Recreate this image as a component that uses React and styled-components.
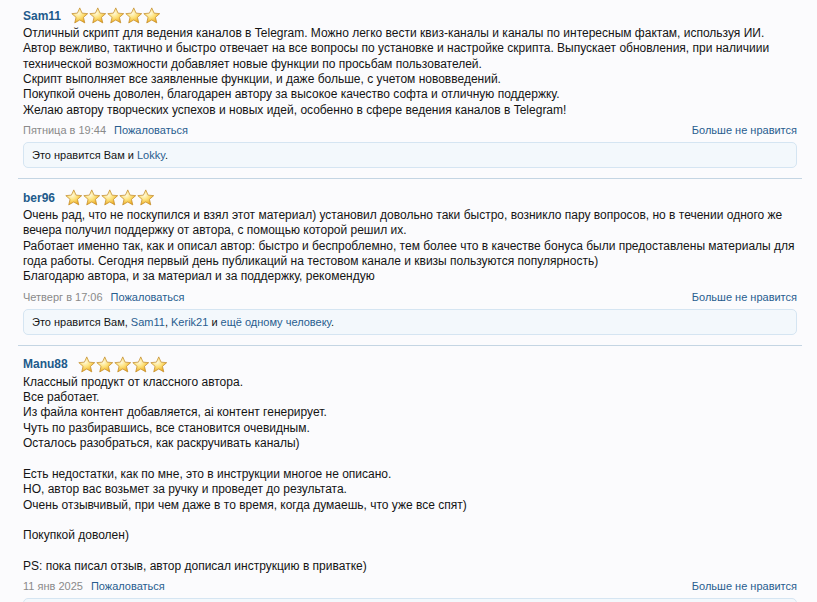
import React from 'react';
import styled, { createGlobalStyle } from 'styled-components';

const Global = createGlobalStyle`
  body {
    margin: 0;
    background: #fbfbfd;
    font-family: "Liberation Sans", Arial, sans-serif;
    color: #141414;
    overflow: hidden;
  }
`;

const List = styled.div`
  margin-top: -3px;
  padding-left: 18px;
  width: 784px;
`;

const Post = styled.div`
  padding: 8px 5px 10px;
  border-bottom: 1px solid #c4d5e3;
`;

const Header = styled.div`
  display: flex;
  align-items: center;
  height: 21px;
`;

const Name = styled.a`
  font-size: 12px;
  font-weight: bold;
  color: #215a8b;
  text-decoration: none;
  margin-right: 10px;
`;

const Stars = styled.div`
  display: flex;
  gap: 0.6px;
`;

const Body = styled.div`
  font-size: 12px;
  line-height: 15.35px;
  white-space: pre-line;
`;

const Meta = styled.div`
  display: flex;
  align-items: center;
  font-size: 11px;
  line-height: 14px;
  margin-top: 5px;
`;

const Time = styled.span`
  color: #8a8a8a;
  margin-right: 8px;
`;

const Link = styled.a`
  color: #285d8f;
  text-decoration: none;
  margin-left: ${props => (props.$right ? 'auto' : '0')};
`;

const Likes = styled.div`
  margin-top: 5px;
  height: 24px;
  line-height: 24px;
  padding: 0 8px;
  font-size: 11px;
  background: #f3f8fc;
  border: 1px solid #d5e5f2;
  border-radius: 5px;
`;

const Star = () => (
  <svg width="17.5" height="17.5" viewBox="0 0 24 24">
    <defs>
      <radialGradient id="sg" cx="40%" cy="35%" r="70%">
        <stop offset="0%" stopColor="#fffbe0" />
        <stop offset="45%" stopColor="#fde17a" />
        <stop offset="100%" stopColor="#eaa418" />
      </radialGradient>
    </defs>
    <path
      d="M12 1.2l3.2 7.2 7.7.7-5.8 5.1 1.8 7.6L12 17.8l-6.9 4 1.8-7.6-5.8-5.1 7.7-.7z"
      fill="url(#sg)"
      stroke="#c18a2a"
      strokeWidth="1"
      strokeLinejoin="round"
    />
  </svg>
);

const posts = [
  {
    name: 'Sam11',
    text: `Отличный скрипт для ведения каналов в Telegram. Можно легко вести квиз-каналы и каналы по интересным фактам, используя ИИ.
Автор вежливо, тактично и быстро отвечает на все вопросы по установке и настройке скрипта. Выпускает обновления, при наличиии технической возможности добавляет новые функции по просьбам пользователей.
Скрипт выполняет все заявленные функции, и даже больше, с учетом нововведений.
Покупкой очень доволен, благодарен автору за высокое качество софта и отличную поддержку.
Желаю автору творческих успехов и новых идей, особенно в сфере ведения каналов в Telegram!`,
    time: 'Пятница в 19:44',
    likes: (
      <>
        Это нравится Вам и <Link href="#">Lokky</Link>.
      </>
    ),
  },
  {
    name: 'ber96',
    text: `Очень рад, что не поскупился и взял этот материал) установил довольно таки быстро, возникло пару вопросов, но в течении одного же вечера получил поддержку от автора, с помощью которой решил их.
Работает именно так, как и описал автор: быстро и беспроблемно, тем более что в качестве бонуса были предоставлены материалы для года работы. Сегодня первый день публикаций на тестовом канале и квизы пользуются популярность)
Благодарю автора, и за материал и за поддержку, рекомендую`,
    time: 'Четверг в 17:06',
    likes: (
      <>
        Это нравится Вам, <Link href="#">Sam11</Link>, <Link href="#">Kerik21</Link> и{' '}
        <Link href="#">ещё одному человеку</Link>.
      </>
    ),
  },
  {
    name: 'Manu88',
    text: `Классный продукт от классного автора.
Все работает.
Из файла контент добавляется, ai контент генерирует.
Чуть по разбиравшись, все становится очевидным.
Осталось разобраться, как раскручивать каналы)

Есть недостатки, как по мне, это в инструкции многое не описано.
НО, автор вас возьмет за ручку и проведет до результата.
Очень отзывчивый, при чем даже в то время, когда думаешь, что уже все спят)

Покупкой доволен)

PS: пока писал отзыв, автор дописал инструкцию в приватке)`,
    time: '11 янв 2025',
    likes: <>Это нравится Вам.</>,
  },
];

const App = () => (
  <>
    <Global />
    <List>
      {posts.map(p => (
        <Post key={p.name}>
          <Header>
            <Name href="#">{p.name}</Name>
            <Stars>
              {[0, 1, 2, 3, 4].map(i => (
                <Star key={i} />
              ))}
            </Stars>
          </Header>
          <Body>{p.text}</Body>
          <Meta>
            <Time>{p.time}</Time>
            <Link href="#">Пожаловаться</Link>
            <Link href="#" $right>
              Больше не нравится
            </Link>
          </Meta>
          <Likes>{p.likes}</Likes>
        </Post>
      ))}
    </List>
  </>
);

export default App;
